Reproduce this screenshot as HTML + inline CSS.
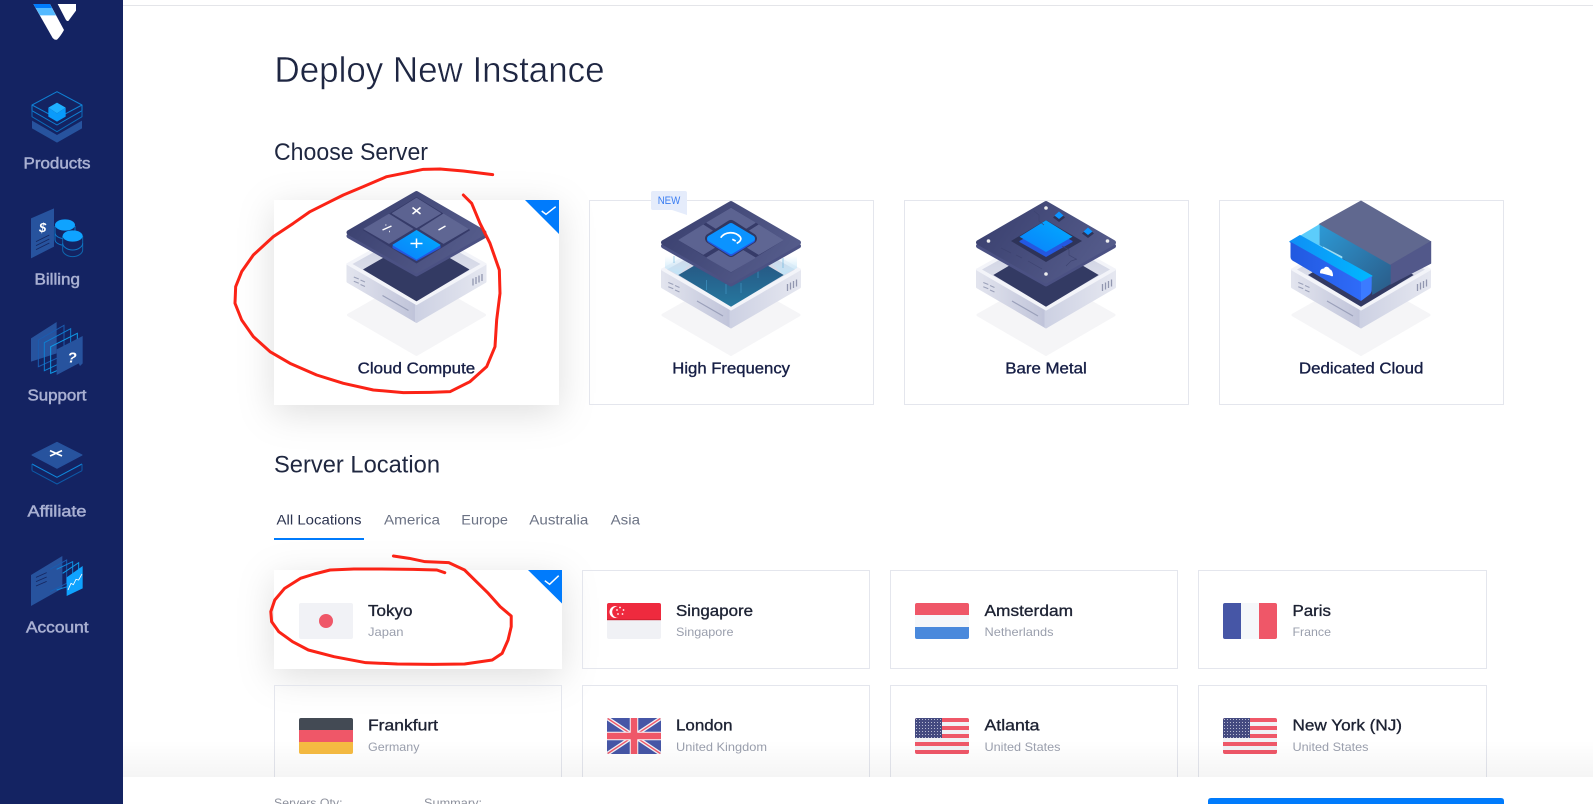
<!DOCTYPE html>
<html><head><meta charset="utf-8"><title>Deploy New Instance</title>
<style>
html,body{margin:0;padding:0;background:#fff;width:1593px;height:804px;overflow:hidden}
svg{display:block}
text{font-family:"Liberation Sans",sans-serif}
.side{font-size:16px;fill:#a9b0d2;stroke:#a9b0d2;stroke-width:.5}
.h2{font-size:24px;fill:#1f2740}
.lab{font-size:16px;fill:#161e45;stroke:#161e45;stroke-width:.35}
.tab{font-size:14px;fill:#6b7284}
.nm{font-size:16px;fill:#1d2233;stroke:#1d2233;stroke-width:.35}
.sb{font-size:12px;fill:#9a9fad}
.ft{font-size:12px;fill:#8c909c}
</style></head><body>
<svg xmlns="http://www.w3.org/2000/svg" width="1593" height="804" viewBox="0 0 1593 804">
<defs>
<filter id="sh" x="-40%" y="-60%" width="180%" height="220%"><feDropShadow dx="0" dy="8" stdDeviation="18" flood-color="#000" flood-opacity=".13"/></filter>
<linearGradient id="wl" x1="0" x2="1" y1="0" y2="0"><stop offset="0" stop-color="#e2e4ee"/><stop offset="1" stop-color="#bfc3d9"/></linearGradient>
<linearGradient id="wr" x1="0" x2="1" y1="0" y2="0"><stop offset="0" stop-color="#cdd1e3"/><stop offset="1" stop-color="#e5e7f0"/></linearGradient>
<linearGradient id="rim" x1="0" x2="0" y1="0" y2="1"><stop offset="0" stop-color="#c9cddf"/><stop offset="1" stop-color="#e6e8f1"/></linearGradient>
<linearGradient id="pl" x1="0" x2="1" y1=".3" y2=".7"><stop offset="0" stop-color="#3b4170"/><stop offset="1" stop-color="#565d8c"/></linearGradient>
<linearGradient id="blue" x1="0" x2="1" y1="1" y2="0"><stop offset="0" stop-color="#0b7ffa"/><stop offset="1" stop-color="#00adff"/></linearGradient>
<linearGradient id="teal" x1="0" x2="0" y1="0" y2="1"><stop offset="0" stop-color="#274a78"/><stop offset="1" stop-color="#26789f"/></linearGradient>
<linearGradient id="glow" x1="0" x2="0" y1="0" y2="1"><stop offset="0" stop-color="#bfe4f8" stop-opacity="0"/><stop offset="1" stop-color="#bfe4f8" stop-opacity=".95"/></linearGradient>
<linearGradient id="slot" x1="0" x2="1" y1="0" y2="1"><stop offset="0" stop-color="#2c9ad6"/><stop offset="1" stop-color="#2b5a86"/></linearGradient>
<linearGradient id="dtop" x1="0" x2="1" y1="0" y2="0"><stop offset="0" stop-color="#0f8ff5"/><stop offset="1" stop-color="#00b8ff"/></linearGradient>
<linearGradient id="dfr" x1="0" x2="1" y1="0" y2="0"><stop offset="0" stop-color="#2159e0"/><stop offset="1" stop-color="#2f6bf8"/></linearGradient>
<linearGradient id="fade" x1="0" x2="0" y1="0" y2="1"><stop offset="0" stop-color="#000" stop-opacity="0"/><stop offset="1" stop-color="#000" stop-opacity=".04"/></linearGradient>
<clipPath id="f"><rect width="54" height="36" rx="2"/></clipPath>
<pattern id="st" width="3" height="3" patternUnits="userSpaceOnUse"><rect width="3" height="3" fill="#444a80"/><circle cx="1.5" cy="1.5" r=".5" fill="#dfe1ef"/></pattern>

<path id="shd" d="M0 276.500L68 315 0 354.500-68 315Z" fill="#f5f5f7" stroke="#f5f5f7" stroke-width="3" stroke-linejoin="round"/>
<g id="base">
 <path d="M-68.500 270L0 309V326.800L-68.500 287Z" fill="url(#wl)" stroke="url(#wl)" stroke-width="3" stroke-linejoin="round"/>
 <path d="M68.500 270L0 309V326.800L68.500 287Z" fill="url(#wr)" stroke="url(#wr)" stroke-width="3" stroke-linejoin="round"/>
 <path d="M0 231L69 269.500 0 309.500-69 269.500Z" fill="#f3f4f9" stroke="#f3f4f9" stroke-width="2" stroke-linejoin="round"/>
 <path d="M0 234L64 269.500 0 306-64 269.500Z" fill="url(#rim)"/>
 <path d="M-62.700 282.500l5 2M-62.700 286.800l5 2M-56 285.500l4.500 2M-56 290l4.500 2" stroke="#9ba1b9" stroke-width="1.100" fill="none"/>
 <path d="M56.500 284v7M59.500 282.500v7M62.500 281v7M65.500 279.500v7" stroke="#9297b0" stroke-width="1.300" fill="none"/>
 <path d="M-34 301L-8 316" stroke="#9aa0ba" stroke-width="1.200" fill="none"/>
</g>
<g id="plate">
 <path d="M0 207L67.500 246 0 284-67.500 246Z" fill="#4b5183" stroke="#4b5183" stroke-width="5" stroke-linejoin="round"/>
 <path d="M0 203.500L67.500 242.500 0 281-67.500 242.500Z" fill="url(#pl)" stroke="url(#pl)" stroke-width="5" stroke-linejoin="round"/>
</g>
</defs>

<rect width="1593" height="804" fill="#fff"/>
<rect x="123" y="5" width="1470" height="1" fill="#e4e5e9"/>

<!-- sidebar -->
<rect width="123" height="804" fill="#142362"/>
<g transform="scale(.33333)">
 <path d="M100 12H150L192 90Q182 108 172 118 165 122 158 114Z" fill="#fff"/>
 <path d="M100 12H150L156 24H107Z" fill="#007bfc"/>
 <path d="M107 24H156L168 46H120Z" fill="#55baff"/>
 <path d="M173 12H228V32L205 63Q200 64 197 58Z" fill="#fff"/>

 <path d="M96 362L171 405 246 362V385L171 428 96 385Z" fill="#27539e"/>
 <g fill="none" stroke="#0f80d4" stroke-width="3" stroke-linejoin="round">
  <path d="M171 275L246 315 171 355 96 315Z"/><path d="M96 315V332L171 375 246 332V315"/><path d="M96 332V350L171 395 246 350V332" stroke="#0c6ab8"/>
 </g>
 <path d="M171 308L197 323 171 340 145 323Z" fill="#1fb0ff"/><path d="M145 323L171 340V365L145 350Z" fill="#0a9bfa"/><path d="M197 323L171 340V365L197 350Z" fill="#089bfb"/>

 <path d="M93 655L162 625V740L93 775Z" fill="#27539e"/>
 <path d="M108 725L148 705M108 737L148 717M108 749L148 729" stroke="#16265f" stroke-width="2.500"/>
 <g fill="none" stroke="#0e76c6" stroke-width="3"><path d="M165 678V718C165 728 178 736 195 736S225 728 225 718V678"/><path d="M165 698C165 708 178 716 195 716"/></g>
 <ellipse cx="195" cy="675" rx="30" ry="17" fill="#0fa3ff"/>
 <path d="M188 708V750C188 760 202 770 218 770S248 760 248 750V708" fill="#142362" stroke="#0e66ae" stroke-width="3"/>
 <path d="M188 730C188 740 202 750 218 750S248 740 248 730" fill="none" stroke="#0e76c6" stroke-width="3"/>
 <ellipse cx="218" cy="708" rx="30" ry="17" fill="#0fa3ff"/>
</g>
<text x="39" y="232" font-size="13" font-weight="bold" font-style="italic" fill="#fff">$</text>
<g transform="translate(0 330) scale(.33333)">
 <path d="M93 25L170 -24V70L93 95Z" fill="#27539e"/>
 <g fill="none" stroke-width="3">
  <path d="M115 30L192 -14V75L115 110Z" stroke="#1a5cb0"/>
  <path d="M133 38L212 -4V85L133 122Z" stroke="#0f7ed0"/>
  <path d="M152 50L232 10V95L152 130Z" stroke="#0f9be8"/>
 </g>
 <path d="M170 58L248 18V100L240 108 236 100 170 135Z" fill="#27539e"/>

 <g fill="none" stroke-width="3" stroke-linejoin="round"><path d="M96 422L171 462 246 422" stroke="#0d5aa8"/><path d="M96 402L171 442 246 402" stroke="#0f88dc"/><path d="M96 402V422M246 402V422" stroke="#0d5aa8"/></g>
 <path d="M171 337L246 375 171 415 96 375Z" fill="#27539e" stroke="#27539e" stroke-width="3" stroke-linejoin="round"/>
 <path d="M150 362L186 378M186 362L150 378" stroke="#fff" stroke-width="5"/>

 <path d="M93 735L187 678V775L93 828Z" fill="#27539e"/>
 <path d="M108 742L140 728M108 755L140 741M108 768L140 754" stroke="#16265f" stroke-width="2.500"/>
 <g fill="none" stroke-width="3"><path d="M150 718L200 690V760L150 785" stroke="#1a5cb0"/><path d="M170 718L218 695V765L170 780" stroke="#0f88dc"/><path d="M188 730L236 698V760" stroke="#0f9be8"/></g>
 <path d="M200 742L248 708V775L200 798Z" fill="#0fa3ff"/>
 <path d="M204 780L213 760 220 764 228 748 236 750 246 732" fill="none" stroke="#fff" stroke-width="2.500"/>
</g>
<text x="67.500" y="362.500" font-size="15" font-weight="bold" font-style="italic" fill="#fff">?</text>
<text class="side" x="23.500" y="168.500" textLength="67" lengthAdjust="spacingAndGlyphs">Products</text>
<text class="side" x="34.500" y="284.500" textLength="45.500" lengthAdjust="spacingAndGlyphs">Billing</text>
<text class="side" x="27.500" y="400.500" textLength="59" lengthAdjust="spacingAndGlyphs">Support</text>
<text class="side" x="27.500" y="516.500" textLength="59" lengthAdjust="spacingAndGlyphs">Affiliate</text>
<text class="side" x="26" y="632.500" textLength="62.500" lengthAdjust="spacingAndGlyphs">Account</text>

<!-- headings -->
<text x="274.500" y="82" font-size="36" fill="#1e2642" stroke="#fff" stroke-width=".45" textLength="330" lengthAdjust="spacingAndGlyphs">Deploy New Instance</text>
<text class="h2" x="274" y="160" textLength="154" lengthAdjust="spacingAndGlyphs">Choose Server</text>
<text class="h2" x="274" y="472.500" textLength="166" lengthAdjust="spacingAndGlyphs">Server Location</text>

<!-- server cards -->
<rect x="274" y="200" width="285" height="205" fill="#fff" filter="url(#sh)"/>
<rect x="589.500" y="200.500" width="284" height="204" fill="none" stroke="#e4e6ed"/>
<rect x="904.500" y="200.500" width="284" height="204" fill="none" stroke="#e4e6ed"/>
<rect x="1219.500" y="200.500" width="284" height="204" fill="none" stroke="#e4e6ed"/>

<!-- cloud compute -->
<g transform="translate(416.500 0)">
 <use href="#shd"/>
 <g transform="translate(0 -5.500)"><use href="#base"/><path d="M0 244.500L52.500 275 0 306.500-53 275Z" fill="#333a63" stroke="#333a63" stroke-width=".6" stroke-linejoin="round"/></g>
 <g transform="translate(0 -10)"><use href="#plate"/></g>
 <path d="M0 197.500L53 230 0 263-53 230Z" fill="#363b69" stroke="#363b69" stroke-width="1" stroke-linejoin="round"/>
 <path d="M0 198.300L24 213.300 0 227.700-24 213.300Z" fill="#5c6391" stroke="#5c6391" stroke-width="1" stroke-linejoin="round"/>
 <path d="M-27.500 214.300L-3.800 229-27.500 243.300-52.500 229Z" fill="#5c6391" stroke="#5c6391" stroke-width="1" stroke-linejoin="round"/>
 <path d="M27 214L51.500 229 27 243.300 3.500 229Z" fill="#5f6693" stroke="#5f6693" stroke-width="1" stroke-linejoin="round"/>
 <path d="M0 232L24 246V248L0 261-24 248V246Z" fill="#2458e0"/>
 <path d="M0 230.500L23.500 245 0 259-23.500 245Z" fill="url(#blue)" stroke="url(#blue)" stroke-width="1" stroke-linejoin="round"/>
 <path d="M-4 207.500L4 214M4 207.500L-4 214M22 230L29 226M-34 230L-25 226M-31 225h.8M-27.500 231.500h.8M-6 243.500H6M0 238.500V248" stroke="#fff" stroke-width="1.500" fill="none"/>
</g>
<path d="M525 200H559V234Z" fill="#007bfc"/>
<path d="M541.700 211L546 214.300 555.700 206.700" fill="none" stroke="#fff" stroke-width="1.500"/>
<text class="lab" x="357.700" y="373.500" textLength="117.500" lengthAdjust="spacingAndGlyphs">Cloud Compute</text>

<!-- high frequency -->
<g transform="translate(731 0)">
 <use href="#shd"/><use href="#base"/>
 <path d="M-66 256L-32 256-52.700 275-66 268ZM66 256L32 256 52.700 275 66 268Z" fill="url(#glow)"/>
 <path d="M0 244L52.700 275 0 306.700-52.700 275Z" fill="url(#teal)"/>
 <path d="M-24.500 280v10M-5 284v10M10 283v10M27 268v10M-57 256v7M52 258v10" stroke="#4aa6d8" stroke-width=".7" opacity=".7"/>
 <use href="#plate"/>
 <path d="M0 208L52 240 0 272-52 240Z" fill="#363b69" stroke="#363b69" stroke-width="1" stroke-linejoin="round"/>
 <path d="M0 208.300L24 222.700 0 237.700-24 222.700Z" fill="#5c6391" stroke="#5c6391" stroke-width="1" stroke-linejoin="round"/>
 <path d="M27.700 225L52 240 27.700 254.300 4 240Z" fill="#5f6693" stroke="#5f6693" stroke-width="1" stroke-linejoin="round"/>
 <path d="M-27.700 225L-4.300 240-27.700 254.300-52 240Z" fill="#5c6391" stroke="#5c6391" stroke-width="1" stroke-linejoin="round"/>
 <path d="M0 243.300L24 257.700 0 271.700-24 257.700Z" fill="#5c6391" stroke="#5c6391" stroke-width="1" stroke-linejoin="round"/>
 <path d="M0 225L21 238.500 0 252-21 238.500Z" fill="#32375f" stroke="#32375f" stroke-width="10" stroke-linejoin="round"/>
 <path d="M0 228L21 240 0 253-21 240Z" fill="#2458e0" stroke="#2458e0" stroke-width="6" stroke-linejoin="round"/>
 <path d="M0 226L21 238.500 0 251-21 238.500Z" fill="#0b93ff" stroke="#0b93ff" stroke-width="6" stroke-linejoin="round"/>
 <path d="M-10.300 237.700C-6 231.500 4 231 9 236.700 11 239 9 242 5.700 243.300M1.300 239.300L4.700 241" fill="none" stroke="#fff" stroke-width="1.700"/>
</g>
<path d="M653 191H685Q687 191 687 193V215L672 210H653Q651 210 651 208V193Q651 191 653 191Z" fill="#e5ecfb"/>
<text x="657.700" y="204" font-size="11" fill="#3a7df2" textLength="22.600" lengthAdjust="spacingAndGlyphs">NEW</text>
<text class="lab" x="672.300" y="373.500" textLength="117.700" lengthAdjust="spacingAndGlyphs">High Frequency</text>

<!-- bare metal -->
<g transform="translate(1046 0)">
 <use href="#shd"/><use href="#base"/>
 <path d="M0 244L52.700 275 0 306.700-52.700 275Z" fill="#333a63"/>
 <use href="#plate"/>
 <path d="M-35 241L0 220 36 241 0 262Z" fill="#2e3358"/>
 <path d="M0 226L26.500 241V242L0 257-26.500 242V241Z" fill="#2458e0"/>
 <path d="M0 220.300L26.500 236.700 0 252-26.500 236.700Z" fill="url(#blue)"/>
 <path d="M13 212L19 217.500 13 222 7 217.500Z" fill="#2e3358"/><path d="M13 211.500L17.500 215.500 13 219 8.500 215.500Z" fill="#0b93ff"/>
 <path d="M42 228L48 233.500 42 238 36 233.500Z" fill="#2e3358"/><path d="M42 227.500L46.500 231.500 42 235 37.500 231.500Z" fill="#0b93ff"/>
 <circle cx="0" cy="208" r="1.800" fill="#eee"/><circle cx="-57.500" cy="241" r="1.800" fill="#eee"/><circle cx="61.500" cy="241" r="1.800" fill="#eee"/><circle cx="0" cy="274" r="1.800" fill="#eee"/>
 <path d="M-12 211l5 4v6l5 4M30 259l-7-4v-5l-7-4M-45 248l10 5M-30 255l6 3M-18 261l14 8M20 266l5-5 6-2" stroke="#3d4370" stroke-width=".7" fill="none"/>
</g>
<text class="lab" x="1005.300" y="373.500" textLength="81.400" lengthAdjust="spacingAndGlyphs">Bare Metal</text>

<!-- dedicated cloud -->
<g transform="translate(1361 0)">
 <use href="#shd"/><use href="#base"/>
 <path d="M-53 275L0 306.700 52.700 275 0 244Z" fill="#333a63"/>
 <path d="M0 201L69.700 241.700 29.700 265-41.700 224.300Z" fill="#60688f" stroke="#60688f" stroke-width="1" stroke-linejoin="round"/>
 <path d="M69.700 241.700V263.300L29.700 284V265Z" fill="#52588a" stroke="#52588a" stroke-width="1" stroke-linejoin="round"/>
 <path d="M-41.700 224.300L29.700 265V284L11.300 295 10 276.700-18.700 258.300-41.700 245Z" fill="url(#slot)"/>
 <path d="M-41.700 224.300V245L-18.700 258.300-61 235.700Z" fill="#5ccdfb"/>
 <path d="M-38 246.500L-18.700 256.500V259L-38 249Z" fill="#9fdcf2"/>
 <path d="M-71 241.700L-61 235.700 10.700 276 0 281.700Z" fill="url(#dtop)" stroke="url(#dtop)" stroke-width="1.400" stroke-linejoin="round"/>
 <path d="M-70.500 241.700L0 281.700V301L-66 262Q-70.500 260-70.500 257Z" fill="url(#dfr)"/>
 <path d="M0 281.700L10.700 276V290Q10.700 293 8 295L0 301Z" fill="#3b7bff"/>
 <path d="M-41 272.500c0-3 2-4 4-4 1-3 5-2 6 1 2 0 3 4 3 6 0 1-1 1-3 0l-8-2c-1 0-2 0-2-1Z" fill="#fff"/>
</g>
<text class="lab" x="1299" y="373.500" textLength="124.300" lengthAdjust="spacingAndGlyphs">Dedicated Cloud</text>

<!-- tabs -->
<text x="276.500" y="524.500" font-size="14" fill="#2c3450" textLength="85" lengthAdjust="spacingAndGlyphs">All Locations</text>
<text class="tab" x="384" y="524.500" textLength="56" lengthAdjust="spacingAndGlyphs">America</text>
<text class="tab" x="461.300" y="524.500" textLength="46.700" lengthAdjust="spacingAndGlyphs">Europe</text>
<text class="tab" x="529.300" y="524.500" textLength="59" lengthAdjust="spacingAndGlyphs">Australia</text>
<text class="tab" x="610.600" y="524.500" textLength="29.400" lengthAdjust="spacingAndGlyphs">Asia</text>
<rect x="274" y="538" width="90" height="2" fill="#007bfc"/>

<!-- location cards -->
<rect x="274" y="570" width="288" height="99" fill="#fff" filter="url(#sh)"/>
<g fill="none" stroke="#e4e6ed">
 <rect x="582.500" y="570.500" width="287" height="98"/>
 <rect x="890.500" y="570.500" width="287" height="98"/>
 <rect x="1198.500" y="570.500" width="288" height="98"/>
 <rect x="274.500" y="685.500" width="287" height="98"/>
 <rect x="582.500" y="685.500" width="287" height="98"/>
 <rect x="890.500" y="685.500" width="287" height="98"/>
 <rect x="1198.500" y="685.500" width="288" height="98"/>
</g>
<path d="M528 570H562V603.500Z" fill="#007bfc"/>
<path d="M544.800 580.700L549.600 584.300 558.700 575.700" fill="none" stroke="#fff" stroke-width="1.500"/>

<!-- flags -->
<g transform="translate(299 603)" clip-path="url(#f)"><rect width="54" height="36" fill="#f1f2f6"/><ellipse cx="27" cy="18" rx="7" ry="7" fill="#ef5768"/></g>
<g transform="translate(607 603)" clip-path="url(#f)"><rect width="54" height="36" fill="#f0f1f5"/><rect width="54" height="17" fill="#ee2a3e"/><rect y="16.300" width="54" height=".9" fill="#c8202f"/><circle cx="8.500" cy="9" r="6" fill="#fff"/><circle cx="11" cy="9" r="5.800" fill="#ee2a3e"/><g fill="#fff"><circle cx="13" cy="4.500" r=".9"/><circle cx="16.500" cy="7" r=".9"/><circle cx="15.500" cy="11" r=".9"/><circle cx="11" cy="11" r=".9"/><circle cx="10" cy="7" r=".9"/></g></g>
<g transform="translate(915 603)" clip-path="url(#f)"><rect width="54" height="12" fill="#ef5768"/><rect y="12" width="54" height="12" fill="#f5f7fa"/><rect y="24" width="54" height="12" fill="#4a89dc"/></g>
<g transform="translate(1223 603)" clip-path="url(#f)"><rect width="18" height="36" fill="#4656a6"/><rect x="18" width="18" height="36" fill="#f5f7fa"/><rect x="36" width="18" height="36" fill="#ef5768"/></g>
<g transform="translate(299 718)" clip-path="url(#f)"><rect width="54" height="12" fill="#434a54"/><rect y="12" width="54" height="12" fill="#ef5768"/><rect y="24" width="54" height="12" fill="#f6bb42"/></g>
<g transform="translate(607 718)" clip-path="url(#f)"><rect width="54" height="36" fill="#4656a6"/><path d="M0 0L54 36M54 0L0 36" stroke="#f0f1f5" stroke-width="4"/><path d="M0 0L54 36M54 0L0 36" stroke="#ef5768" stroke-width="1.400"/><path d="M27 0V36M0 18H54" stroke="#f5f7fa" stroke-width="8.500"/><path d="M27 0V36M0 18H54" stroke="#ef5768" stroke-width="6.500"/></g>
<g transform="translate(915 718)" clip-path="url(#f)"><rect width="54" height="36" fill="#f0f1f5"/><g fill="#ef5768"><rect width="54" height="4"/><rect y="8" width="54" height="4"/><rect y="16" width="54" height="4"/><rect y="24" width="54" height="4"/><rect y="32" width="54" height="4"/></g><rect width="27" height="20" fill="url(#st)"/></g>
<g transform="translate(1223 718)" clip-path="url(#f)"><rect width="54" height="36" fill="#f0f1f5"/><g fill="#ef5768"><rect width="54" height="4"/><rect y="8" width="54" height="4"/><rect y="16" width="54" height="4"/><rect y="24" width="54" height="4"/><rect y="32" width="54" height="4"/></g><rect width="27" height="20" fill="url(#st)"/></g>

<!-- location text -->
<text class="nm" x="368" y="616" textLength="44.500" lengthAdjust="spacingAndGlyphs">Tokyo</text><text class="sb" x="368" y="636" textLength="35.500" lengthAdjust="spacingAndGlyphs">Japan</text>
<text class="nm" x="676" y="616" textLength="77" lengthAdjust="spacingAndGlyphs">Singapore</text><text class="sb" x="676" y="636" textLength="57.500" lengthAdjust="spacingAndGlyphs">Singapore</text>
<text class="nm" x="984.500" y="616" textLength="88.500" lengthAdjust="spacingAndGlyphs">Amsterdam</text><text class="sb" x="984.500" y="636" textLength="69" lengthAdjust="spacingAndGlyphs">Netherlands</text>
<text class="nm" x="1292.500" y="616" textLength="38.500" lengthAdjust="spacingAndGlyphs">Paris</text><text class="sb" x="1292.500" y="636" textLength="38.500" lengthAdjust="spacingAndGlyphs">France</text>
<text class="nm" x="368" y="730.500" textLength="70" lengthAdjust="spacingAndGlyphs">Frankfurt</text><text class="sb" x="368" y="751" textLength="51.500" lengthAdjust="spacingAndGlyphs">Germany</text>
<text class="nm" x="676" y="730.500" textLength="56.500" lengthAdjust="spacingAndGlyphs">London</text><text class="sb" x="676" y="751" textLength="91" lengthAdjust="spacingAndGlyphs">United Kingdom</text>
<text class="nm" x="984.500" y="730.500" textLength="55" lengthAdjust="spacingAndGlyphs">Atlanta</text><text class="sb" x="984.500" y="751" textLength="76" lengthAdjust="spacingAndGlyphs">United States</text>
<text class="nm" x="1292.500" y="730.500" textLength="109.500" lengthAdjust="spacingAndGlyphs">New York (NJ)</text><text class="sb" x="1292.500" y="751" textLength="76" lengthAdjust="spacingAndGlyphs">United States</text>

<!-- footer -->
<rect x="123" y="740" width="1470" height="37" fill="url(#fade)"/>
<rect x="123" y="777" width="1470" height="27" fill="#fff"/>
<text class="ft" x="274" y="807" textLength="68.500" lengthAdjust="spacingAndGlyphs">Servers Qty:</text>
<text class="ft" x="424" y="807" textLength="58" lengthAdjust="spacingAndGlyphs">Summary:</text>
<path d="M1208 804V801Q1208 798 1211 798H1501Q1504 798 1504 801V804Z" fill="#007bfc"/>

<!-- red annotations -->
<g fill="none" stroke="#fb2316" stroke-linecap="round" stroke-linejoin="round">
 <polyline vector-effect="non-scaling-stroke" stroke-width="3" transform="translate(230 160) scale(.33333)" points="788,44 700,33 630,27 580,28 530,38 470,50 400,80 340,105 290,130 240,155 190,190 130,230 70,285 35,335 17,380 15,430 35,480 70,530 120,575 180,610 260,645 340,670 430,690 520,698 600,697 660,695 720,665 770,620 795,560 800,480 810,400 808,330 780,250 750,190 725,130 700,105"/>
 <polyline vector-effect="non-scaling-stroke" stroke-width="3" transform="translate(255 490) scale(.3954 .33333)" points="480,248 460,240 400,238 320,237 250,237 190,240 150,252 115,265 75,295 50,330 40,365 42,395 60,425 95,455 135,480 200,500 280,518 360,522 450,523 530,522 600,510 625,490 640,450 648,410 648,378 620,350 590,310 560,275 530,240 490,218 430,215 390,205 350,198"/>
</g>
</svg>
</body></html>
